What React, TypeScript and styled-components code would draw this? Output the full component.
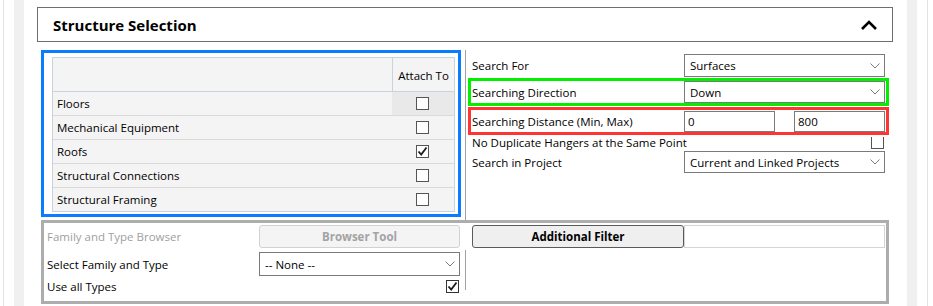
import styled, { createGlobalStyle, css } from 'styled-components'

const FONT = `"Open Sans", "Noto Sans", sans-serif`

const GlobalStyle = createGlobalStyle`
    body {
        margin: 0;
        background: #fff;
        font-family: ${FONT};
        font-size: 11.5px;
        color: #000;
    }
`

const CATEGORIES = [
    { name: 'Floors', checked: false, active: true },
    { name: 'Mechanical Equipment', checked: false },
    { name: 'Roofs', checked: true },
    { name: 'Structural Connections', checked: false },
    { name: 'Structural Framing', checked: false },
]

const Chevron = () => (
    <svg width='10' height='6' viewBox='0 0 10 6'>
        <path d='M0.5 0.5 L5 5 L9.5 0.5' fill='none' stroke='#7a7a7a' strokeWidth='1' />
    </svg>
)

const Tick = () => (
    <svg width='11' height='11' viewBox='0 0 11 11'>
        <path d='M1.5 5.5 L4.2 8.5 L9.5 1.5' fill='none' stroke='#1a1a1a' strokeWidth='1.8' />
    </svg>
)

const ComboBox = ({ value, height = 23 }: { value: string; height?: number }) => (
    <Combo $height={height}>
        <span>{value}</span>
        <Chevron />
    </Combo>
)

const CheckBox = ({ checked, dark, open }: { checked?: boolean; dark?: boolean; open?: boolean }) => (
    <Box $dark={dark} $open={open}>
        {checked && <Tick />}
    </Box>
)

const App = () => (
    <>
        <GlobalStyle />
        <Page>
            <LeftGutter />
            <Main>
                <Header>
                    <Title>Structure Selection</Title>
                    <svg width='16' height='10' viewBox='0 0 16 10'>
                        <path d='M1 9 L8 2 L15 9' fill='none' stroke='#000' strokeWidth='2.6' />
                    </svg>
                </Header>

                <Body>
                    <TopSection>
                        <BlueFrame>
                            <Table>
                                <TableHead>
                                    <span />
                                    <HeadCell>Attach To</HeadCell>
                                </TableHead>
                                {CATEGORIES.map((c) => (
                                    <TableRow key={c.name}>
                                        <NameCell>{c.name}</NameCell>
                                        <CheckCell $active={!!c.active}>
                                            <CheckBox checked={c.checked} />
                                        </CheckCell>
                                    </TableRow>
                                ))}
                            </Table>
                        </BlueFrame>

                        <RightPane>
                            <FieldRow>
                                <span>Search For</span>
                                <ComboBox value='Surfaces' />
                            </FieldRow>
                            <Highlight $color='#00f000'>
                                <FieldRow $inset>
                                    <span>Searching Direction</span>
                                    <ComboBox value='Down' height={22} />
                                </FieldRow>
                            </Highlight>
                            <Highlight $color='#ff3535'>
                                <FieldRow $inset>
                                    <span>Searching Distance (Min, Max)</span>
                                    <RangeInputs>
                                        <TextBox>0</TextBox>
                                        <TextBox>800</TextBox>
                                    </RangeInputs>
                                </FieldRow>
                            </Highlight>
                            <CheckRow>
                                <span>No Duplicate Hangers at the Same Point</span>
                                <CheckBox open />
                            </CheckRow>
                            <FieldRow $gap={1}>
                                <span>Search in Project</span>
                                <ComboBox value='Current and Linked Projects' height={22} />
                            </FieldRow>
                        </RightPane>
                    </TopSection>

                    <BottomFrame>
                        <FamilyColumn>
                            <FamilyRow>
                                <DisabledLabel>Family and Type Browser</DisabledLabel>
                                <Button $disabled>Browser Tool</Button>
                            </FamilyRow>
                            <FamilyRow $gap={4}>
                                <span>Select Family and Type</span>
                                <ComboBox value='-- None --' height={24} />
                            </FamilyRow>
                            <FamilyRow $gap={3}>
                                <span>Use all Types</span>
                                <CheckBox checked dark />
                            </FamilyRow>
                        </FamilyColumn>

                        <FilterColumn>
                            <FilterBar>
                                <Button>Additional Filter</Button>
                                <FilterValue />
                            </FilterBar>
                            <FilterList />
                        </FilterColumn>
                    </BottomFrame>
                </Body>
            </Main>
            <RightGutter />
        </Page>
    </>
)

const Page = styled.div`
    display: flex;
    height: 306px;
    overflow: hidden;
`

const LeftGutter = styled.div`
    box-sizing: border-box;
    width: 21px;
    margin-left: 3px;
    border-left: 1px solid #e3e3e3;
    border-right: 10px solid #f0f0f0;
`

const RightGutter = styled.div`
    box-sizing: border-box;
    width: 21px;
    margin-right: 5px;
    border-left: 10px solid #f0f0f0;
    border-right: 1px solid #e3e3e3;
`

const Main = styled.div`
    flex: 1;
    min-width: 0;
    padding: 7px 14px 0 13px;
`

const Header = styled.div`
    box-sizing: border-box;
    height: 35px;
    border: 1px solid #6e6e6e;
    display: flex;
    align-items: center;
    justify-content: space-between;
    padding: 0 15px 0 15px;
`

const Title = styled.h2`
    margin: 0;
    font-size: 15px;
    font-weight: 700;
`

const Body = styled.div`
    width: 848px;
    margin: 8px 0 0 4px;
`

const TopSection = styled.div`
    display: flex;
    align-items: flex-start;
    gap: 4px;
    height: 170px;
`

const BlueFrame = styled.div`
    box-sizing: border-box;
    width: 420px;
    height: 167px;
    border: 3px solid #0a7cff;
    padding: 4px 3px 0 8px;
`

const Table = styled.div`
    border: 1px solid #c9d3df;
    background: #f4f4f4;
`

const rowGrid = css`
    display: grid;
    grid-template-columns: 1fr 62px;
`

const TableHead = styled.div`
    ${rowGrid};
    height: 33px;
    border-bottom: 1px solid #c9d3df;
`

const HeadCell = styled.div`
    display: flex;
    align-items: center;
    justify-content: center;
    border-left: 1px solid #c9d3df;
    padding-top: 1px;
`

const TableRow = styled.div`
    ${rowGrid};
    height: 23px;
    border-bottom: 1px solid #dadada;

    &:last-child {
        border-bottom: none;
    }
`

const NameCell = styled.div`
    display: flex;
    align-items: center;
    padding-left: 4px;
`

const CheckCell = styled.div<{ $active: boolean }>`
    display: flex;
    align-items: center;
    justify-content: center;
    padding-right: 1px;
    background: ${({ $active }) => ($active ? '#e9e9e9' : 'transparent')};
`

const Box = styled.div<{ $dark?: boolean; $open?: boolean }>`
    box-sizing: border-box;
    width: 13px;
    height: ${({ $open }) => ($open ? '12px' : '13px')};
    border: 1px solid ${({ $dark }) => ($dark ? '#333' : '#555')};
    ${({ $open }) => $open && 'border-top: none;'}
    background: #fff;
    display: flex;
    align-items: center;
    justify-content: center;
`

const RightPane = styled.div`
    box-sizing: border-box;
    flex: 1;
    height: 170px;
    border-left: 1px solid #a0a0a0;
    padding: 4px 0 0 2px;
    display: flex;
    flex-direction: column;
`

const FieldRow = styled.div<{ $inset?: boolean; $gap?: number }>`
    display: grid;
    grid-template-columns: 212px 201px;
    align-items: center;
    padding-left: ${({ $inset }) => ($inset ? '1px' : '4px')};
    margin-top: ${({ $gap = 0 }) => $gap}px;
`

const Highlight = styled.div<{ $color: string }>`
    box-sizing: border-box;
    height: 28px;
    margin-top: 1px;
    border: 3px solid ${({ $color }) => $color};
    display: flex;
    align-items: center;
`

const Combo = styled.div<{ $height: number }>`
    box-sizing: border-box;
    height: ${({ $height }) => $height}px;
    border: 1px solid #7a7a7a;
    background: #fff;
    display: flex;
    align-items: center;
    justify-content: space-between;
    padding: 0 4px 0 5px;
`

const RangeInputs = styled.div`
    display: grid;
    grid-template-columns: 91px 91px;
    justify-content: space-between;
`

const TextBox = styled.div`
    box-sizing: border-box;
    height: 21px;
    border: 1px solid #7a7a7a;
    background: #fff;
    padding-left: 3px;
    display: flex;
    align-items: center;
`

const CheckRow = styled.div`
    display: flex;
    align-items: center;
    justify-content: space-between;
    height: 15px;
    padding: 0 5px 0 4px;
`

const BottomFrame = styled.div`
    box-sizing: border-box;
    height: 84px;
    border: 3px solid #adadad;
    display: grid;
    grid-template-columns: 421px 1fr;
`

const FamilyColumn = styled.div`
    padding: 2px 0 0 3px;
`

const FamilyRow = styled.div<{ $gap?: number }>`
    display: grid;
    grid-template-columns: 212px 201px;
    align-items: center;
    margin-top: ${({ $gap = 0 }) => $gap}px;

    & > ${Box} {
        justify-self: end;
        margin-right: 1px;
    }
`

const DisabledLabel = styled.span`
    color: #a0a0a0;
`

const Button = styled.div<{ $disabled?: boolean }>`
    box-sizing: border-box;
    height: 23px;
    border-radius: 3px;
    display: flex;
    align-items: center;
    justify-content: center;
    font-weight: 700;
    ${({ $disabled }) =>
        $disabled
            ? css`
                  border: 1px solid #d2d2d2;
                  background: #f4f4f4;
                  color: #a3a3a3;
              `
            : css`
                  border: 1px solid #5a5a5a;
                  background: #efefef;
                  color: #000;
              `}
`

const FilterColumn = styled.div`
    padding-top: 2px;
`

const FilterBar = styled.div`
    display: grid;
    grid-template-columns: 212px 201px;
    padding-left: 7px;
`

const FilterValue = styled.div`
    border: 1px solid #d4d4d4;
    background: #fff;
`

const FilterList = styled.div`
    height: 40px;
    margin-top: 2px;
    border-left: 1px solid #a0a0a0;
`

export default App
